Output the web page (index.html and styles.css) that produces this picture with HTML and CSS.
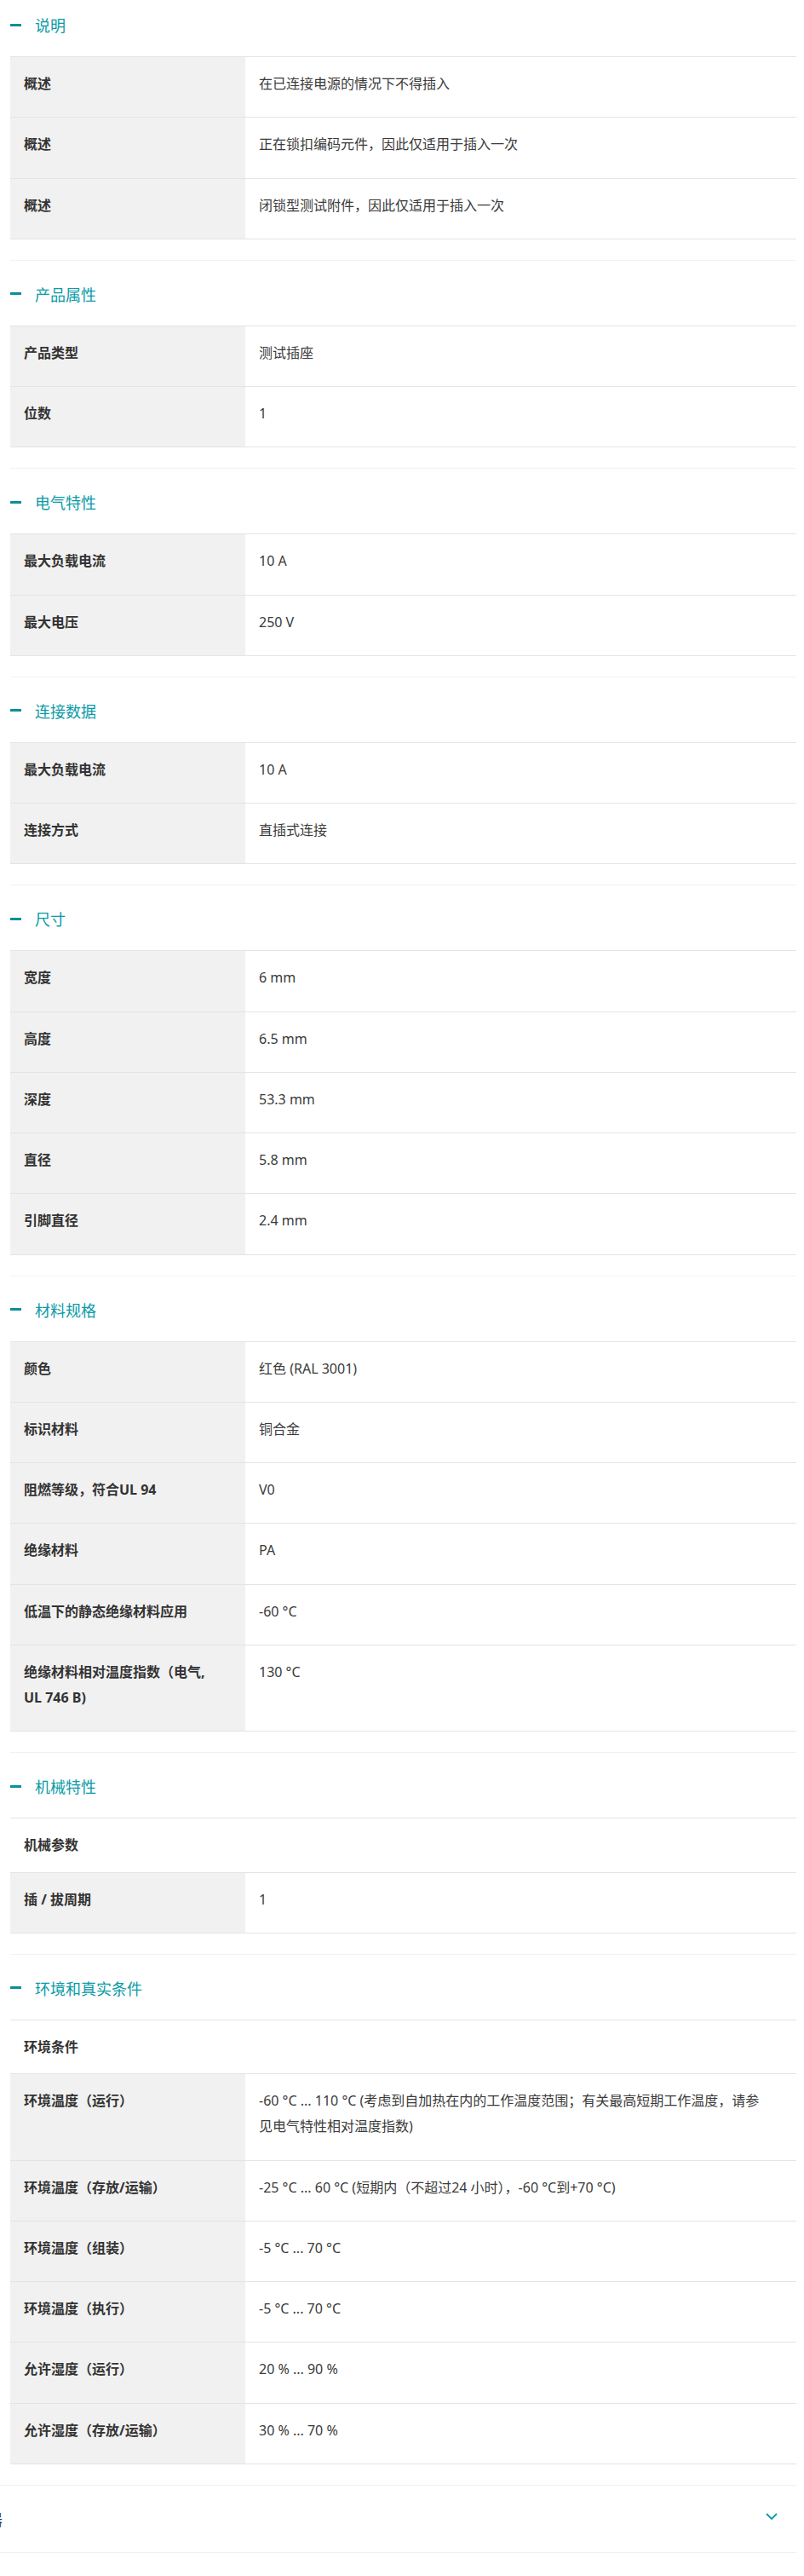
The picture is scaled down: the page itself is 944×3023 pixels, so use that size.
FILE: index.html
```html
<!DOCTYPE html>
<html lang="zh-CN">
<head>
<meta charset="utf-8">
<title>技术数据</title>
<link rel="stylesheet" href="styles.css">
</head>
<body>
<div class="page">
  <div class="specs">
    <section class="section">
      <h2 class="section-title"><span class="dash"></span>说明</h2>
      <div class="table">
        <div class="row"><div class="label">概述</div><div class="value">在已连接电源的情况下不得插入</div></div>
        <div class="row"><div class="label">概述</div><div class="value">正在锁扣编码元件，因此仅适用于插入一次</div></div>
        <div class="row"><div class="label">概述</div><div class="value">闭锁型测试附件，因此仅适用于插入一次</div></div>
      </div>
    </section>

    <section class="section">
      <h2 class="section-title"><span class="dash"></span>产品属性</h2>
      <div class="table">
        <div class="row"><div class="label">产品类型</div><div class="value">测试插座</div></div>
        <div class="row"><div class="label">位数</div><div class="value">1</div></div>
      </div>
    </section>

    <section class="section">
      <h2 class="section-title"><span class="dash"></span>电气特性</h2>
      <div class="table">
        <div class="row"><div class="label">最大负载电流</div><div class="value">10 A</div></div>
        <div class="row"><div class="label">最大电压</div><div class="value">250 V</div></div>
      </div>
    </section>

    <section class="section">
      <h2 class="section-title"><span class="dash"></span>连接数据</h2>
      <div class="table">
        <div class="row"><div class="label">最大负载电流</div><div class="value">10 A</div></div>
        <div class="row"><div class="label">连接方式</div><div class="value">直插式连接</div></div>
      </div>
    </section>

    <section class="section">
      <h2 class="section-title"><span class="dash"></span>尺寸</h2>
      <div class="table">
        <div class="row"><div class="label">宽度</div><div class="value">6 mm</div></div>
        <div class="row"><div class="label">高度</div><div class="value">6.5 mm</div></div>
        <div class="row"><div class="label">深度</div><div class="value">53.3 mm</div></div>
        <div class="row"><div class="label">直径</div><div class="value">5.8 mm</div></div>
        <div class="row"><div class="label">引脚直径</div><div class="value">2.4 mm</div></div>
      </div>
    </section>

    <section class="section">
      <h2 class="section-title"><span class="dash"></span>材料规格</h2>
      <div class="table">
        <div class="row"><div class="label">颜色</div><div class="value">红色 (RAL 3001)</div></div>
        <div class="row"><div class="label">标识材料</div><div class="value">铜合金</div></div>
        <div class="row"><div class="label">阻燃等级，符合UL 94</div><div class="value">V0</div></div>
        <div class="row"><div class="label">绝缘材料</div><div class="value">PA</div></div>
        <div class="row"><div class="label">低温下的静态绝缘材料应用</div><div class="value">-60 °C</div></div>
        <div class="row"><div class="label">绝缘材料相对温度指数（电气, <span class="nowrap">UL 746 B)</span></div><div class="value">130 °C</div></div>
      </div>
    </section>

    <section class="section">
      <h2 class="section-title"><span class="dash"></span>机械特性</h2>
      <div class="table">
        <div class="subhead">机械参数</div>
        <div class="row"><div class="label">插 / 拔周期</div><div class="value">1</div></div>
      </div>
    </section>

    <section class="section">
      <h2 class="section-title"><span class="dash"></span>环境和真实条件</h2>
      <div class="table">
        <div class="subhead">环境条件</div>
        <div class="row"><div class="label">环境温度（运行）</div><div class="value">-60 °C ... 110 °C (考虑到自加热在内的工作温度范围；有关最高短期工作温度，请参见电气特性相对温度指数)</div></div>
        <div class="row"><div class="label">环境温度（存放/运输）</div><div class="value">-25 °C ... 60 °C (短期内（不超过24 小时），-60 °C到+70 °C)</div></div>
        <div class="row"><div class="label">环境温度（组装）</div><div class="value">-5 °C ... 70 °C</div></div>
        <div class="row"><div class="label">环境温度（执行）</div><div class="value">-5 °C ... 70 °C</div></div>
        <div class="row"><div class="label">允许湿度（运行）</div><div class="value">20 % ... 90 %</div></div>
        <div class="row"><div class="label">允许湿度（存放/运输）</div><div class="value">30 % ... 70 %</div></div>
      </div>
    </section>
  </div>

  <div class="accordion">
    <div class="acc-item">
      <span class="acc-title">连接器</span>
      <svg class="chevron" width="14" height="8" viewBox="0 0 14 8" aria-hidden="true"><polyline points="1,1 7,7 13,1" fill="none" stroke="#0a9aa6" stroke-width="1.8"/></svg>
    </div>
    <div class="acc-item">
      <span class="acc-title">分类</span>
      <svg class="chevron" width="14" height="8" viewBox="0 0 14 8" aria-hidden="true"><polyline points="1,1 7,7 13,1" fill="none" stroke="#0a9aa6" stroke-width="1.8"/></svg>
    </div>
  </div>
</div>
</body>
</html>
```

FILE: styles.css
```css
* { box-sizing: border-box; }

body {
  margin: 0;
  background: #ffffff;
  color: #333333;
  font-family: "Noto Sans", "Noto Sans CJK SC", sans-serif;
  font-size: 16px;
}

.page {
  padding-right: 9px;
}

.specs {
  padding-left: 12px;
}

.section {
  border-top: 1px solid #f2f2f2;
  padding: 24px 0 24px;
}

.section:first-child {
  border-top: 0;
  padding-top: 14px;
}

.section-title {
  display: flex;
  align-items: center;
  gap: 16px;
  height: 30px;
  margin: 0 0 22px;
  font-size: 18px;
  font-weight: 400;
  color: #0a9aa6;
}

.dash {
  width: 13px;
  height: 3px;
  background: #0b8f98;
}

.table {
  border-top: 1px solid #e4e4e8;
}

.row {
  display: grid;
  grid-template-columns: 276px 1fr;
  border-bottom: 1px solid #e4e4e8;
}

.label {
  background: #f1f1f1;
  padding: 16px 16px 24px;
  line-height: 30.25px;
  font-weight: 700;
  color: #333333;
}

.nowrap {
  white-space: nowrap;
}

.value {
  padding: 16px 36px 24px 16px;
  line-height: 30.25px;
  color: #3a3a3a;
}

.subhead {
  padding: 16px;
  line-height: 30.25px;
  font-weight: 700;
  border-bottom: 1px solid #e4e4e8;
}

.accordion {
  overflow: hidden;
}

.acc-item {
  display: flex;
  align-items: center;
  justify-content: space-between;
  height: 79px;
  border-top: 1px solid #f0f0f0;
  padding-right: 22px;
}

.acc-title {
  margin-left: -51px;
  font-size: 18px;
  color: #333333;
  white-space: nowrap;
}

.chevron {
  margin-bottom: 5px;
}
```
